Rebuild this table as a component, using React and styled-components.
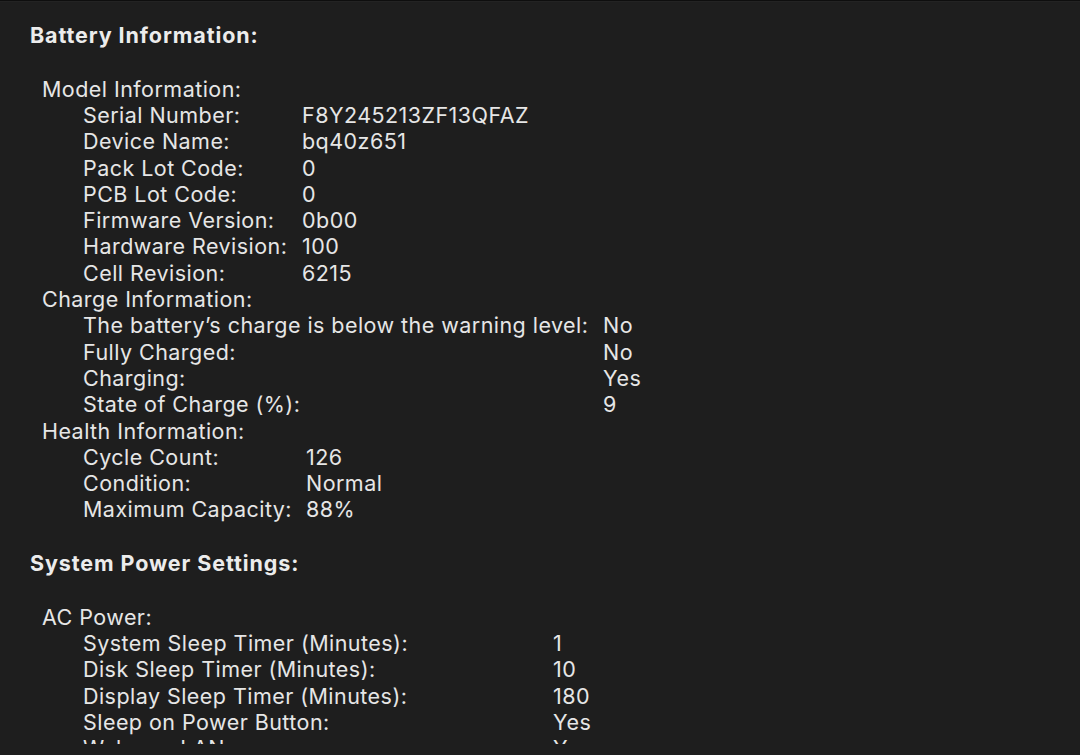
import React from 'react';
import styled, { createGlobalStyle } from 'styled-components';

const GlobalStyle = createGlobalStyle`
  html, body {
    margin: 0;
    padding: 0;
    background: #1e1e1e;
  }
`;

const Page = styled.div`
  width: 1080px;
  height: 755px;
  overflow: hidden;
  box-sizing: border-box;
  background: #1e1e1e;
  border-top: 1px solid #0e0e0e;
  box-shadow: inset 0 1px 0 #232323;
  font-family: Inter, "Noto Sans", sans-serif;
  font-size: 21.5px;
  letter-spacing: 0.45px;
  line-height: 26.3px;
  color: #e6e6e6;
`;

/* the scrolling report view, clipped a bit above the window bottom */
const Report = styled.div`
  height: 743px;
  overflow: hidden;
  box-sizing: border-box;
  padding: 21px 0 0 30px;
`;

const Section = styled.section`
  display: flex;
  flex-direction: column;
  & + & {
    margin-top: 27.4px;
  }
`;

const SectionTitle = styled.h2`
  margin: 0 0 27.4px 0;
  font-size: 21.5px;
  font-weight: 700;
  letter-spacing: 0.9px;
  line-height: 26.3px;
  color: #ececec;
`;

const GroupTitle = styled.div`
  margin-left: 12px;
`;

const Table = styled.div`
  display: grid;
  grid-template-columns: ${p => p.$labelWidth}px auto;
  justify-content: start;
  margin-left: 53px;
`;

const Label = styled.span`
  white-space: nowrap;
`;

const Value = styled.span`
  white-space: nowrap;
`;

const Group = ({ title, labelWidth, rows }) => (
  <>
    <GroupTitle>{title}</GroupTitle>
    <Table $labelWidth={labelWidth}>
      {rows.map(([k, v]) => (
        <React.Fragment key={k}>
          <Label>{k}</Label>
          <Value>{v}</Value>
        </React.Fragment>
      ))}
    </Table>
  </>
);

const model = [
  ['Serial Number:', 'F8Y245213ZF13QFAZ'],
  ['Device Name:', 'bq40z651'],
  ['Pack Lot Code:', '0'],
  ['PCB Lot Code:', '0'],
  ['Firmware Version:', '0b00'],
  ['Hardware Revision:', '100'],
  ['Cell Revision:', '6215'],
];

const charge = [
  ['The battery\u2019s charge is below the warning level:', 'No'],
  ['Fully Charged:', 'No'],
  ['Charging:', 'Yes'],
  ['State of Charge (%):', '9'],
];

const health = [
  ['Cycle Count:', '126'],
  ['Condition:', 'Normal'],
  ['Maximum Capacity:', '88%'],
];

const acPower = [
  ['System Sleep Timer (Minutes):', '1'],
  ['Disk Sleep Timer (Minutes):', '10'],
  ['Display Sleep Timer (Minutes):', '180'],
  ['Sleep on Power Button:', 'Yes'],
  ['Wake on LAN:', 'Yes'],
  ['Current Power Source:', 'Yes'],
];

export default function App() {
  return (
    <Page>
      <GlobalStyle />
      <Report>
        <Section>
          <SectionTitle>Battery Information:</SectionTitle>
          <Group title="Model Information:" labelWidth={219} rows={model} />
          <Group title="Charge Information:" labelWidth={520} rows={charge} />
          <Group title="Health Information:" labelWidth={223} rows={health} />
        </Section>
        <Section>
          <SectionTitle>System Power Settings:</SectionTitle>
          <Group title="AC Power:" labelWidth={470} rows={acPower} />
        </Section>
      </Report>
    </Page>
  );
}
